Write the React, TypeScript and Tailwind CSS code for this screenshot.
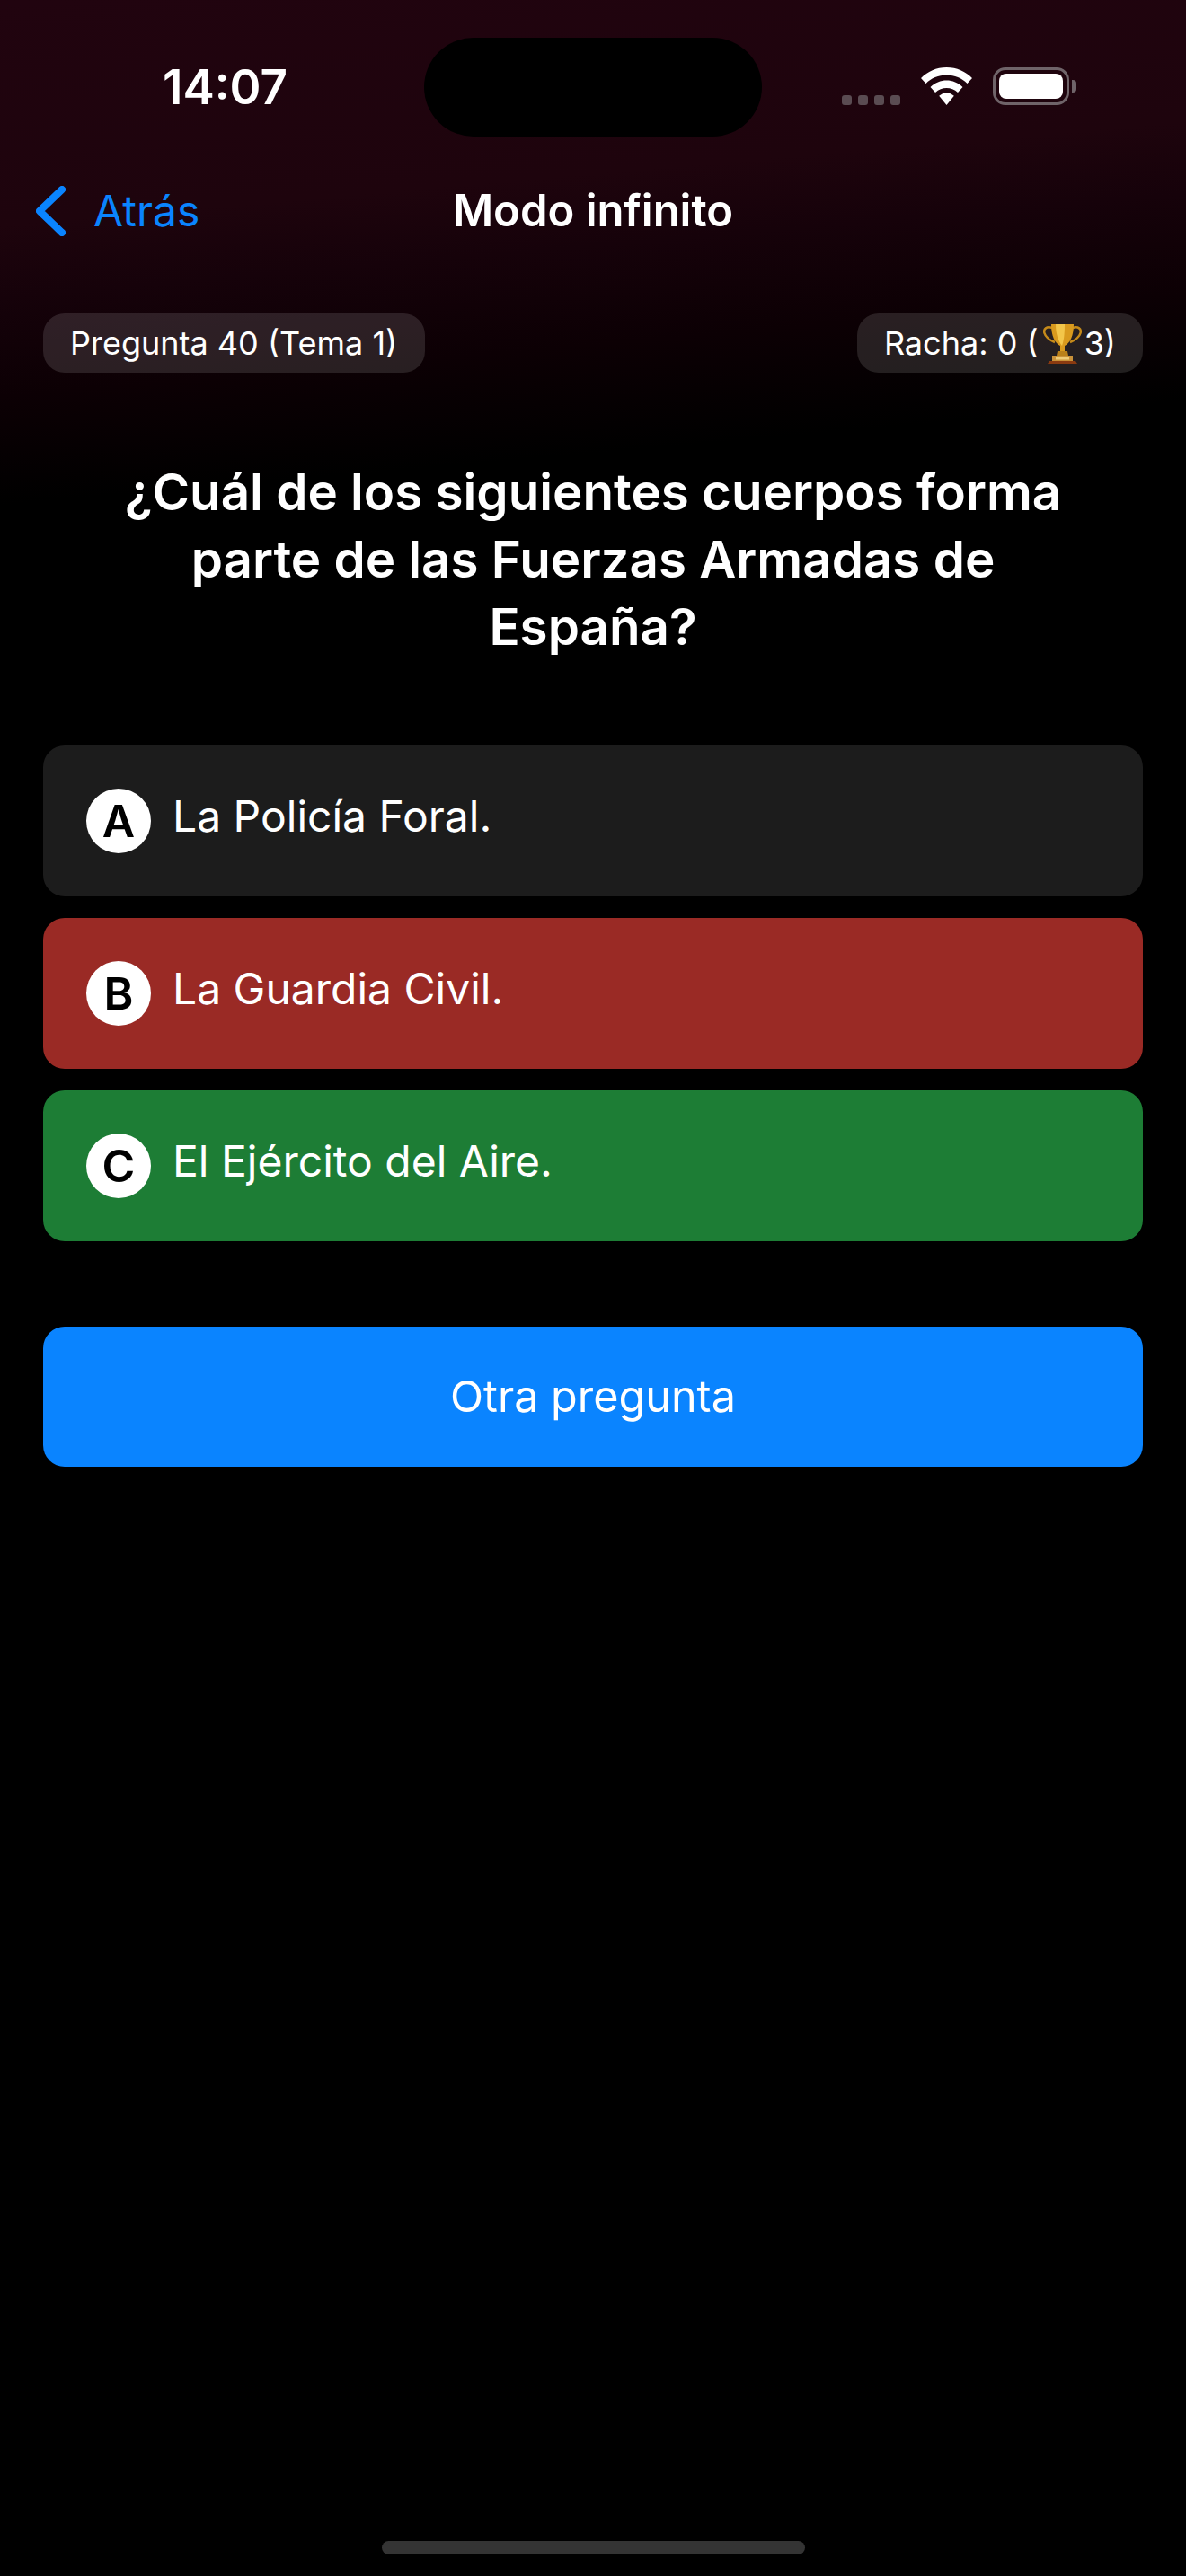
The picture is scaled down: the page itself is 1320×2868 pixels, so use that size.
function Wifi() {
  return (
    <svg width="57" height="42" viewBox="0 0 57 42" fill="#fff">
      <path d="M28.500 0C40 0 49.500 4.500 57 12L51.500 18C45.500 12 37.500 8.500 28.500 8.500S11.500 12 5.500 18L0 12C7.500 4.500 17 0 28.500 0Z" />
      <path d="M28.500 14.500C35 14.500 41.500 17 46.500 22L41 28C37.500 24.700 33 23 28.500 23S19.500 24.700 16 28L10.500 22C15.500 17 22 14.500 28.500 14.500Z" />
      <path d="M28.500 28.500C31.500 28.500 34.500 29.700 36.800 31.800L28.500 42 20.200 31.800C22.500 29.700 25.500 28.500 28.500 28.500Z" />
    </svg>
  );
}

function Battery() {
  return (
    <div className="flex items-center gap-[3px]">
      <div className="w-[85px] h-[42px] rounded-[14px] border-[3px] border-[#6f6469] p-[4px]">
        <div className="w-full h-full rounded-[8px] bg-white" />
      </div>
      <div className="w-[5px] h-[14px] rounded-r-[4px] bg-[#6f6469]" />
    </div>
  );
}

function BackChevron() {
  return (
    <svg width="33" height="56" viewBox="0 0 33 56" fill="none" stroke="#0a84ff" strokeWidth="8" strokeLinecap="round" strokeLinejoin="round">
      <path d="M29 4 4 28 29 52" />
    </svg>
  );
}

function Trophy() {
  return (
    <svg width="43" height="45" viewBox="0 0 43 45" className="shrink-0 ml-[5px] mr-[3px]">
      <path d="M10 5C4 3 0 6 1.500 11 3 16 8 19 13 21M33 5C39 3 43 6 41.500 11 40 16 35 19 30 21" fill="none" stroke="#c58a1a" strokeWidth="2.500" />
      <path d="M9 1H34C34 14 30 22 24 25V31H19V25C13 22 9 14 9 1Z" fill="#d99a1e" />
      <path d="M14 1H24C24 12 23 19 21 25 17 20 14 12 14 1Z" fill="#f3c64a" />
      <path d="M16 31H27L28 36H15Z" fill="#b9801a" />
      <rect x="10" y="36" width="23" height="6" fill="#c9923a" />
      <rect x="14" y="37.500" width="15" height="3" fill="#eecb76" />
      <path d="M7 42H36L38 45H5Z" fill="#8a3a10" />
    </svg>
  );
}

const options = [
  { letter: "A", text: "La Policía Foral.", bg: "bg-[#1c1c1c]" },
  { letter: "B", text: "La Guardia Civil.", bg: "bg-[#9a2a25]" },
  { letter: "C", text: "El Ejército del Aire.", bg: "bg-[#1d7d35]" },
];

export default function App() {
  return (
    <div className="w-[1320px] h-[2868px] flex flex-col bg-[linear-gradient(175deg,#21040f_0,#1e040d_250px,#16020a_330px,#0c0004_440px,#000_560px)] text-white font-['Inter','Liberation_Sans',sans-serif]">
      {/* status bar */}
      <div className="h-[195px] shrink-0 flex items-start pt-[42px]">
        <div className="w-[472px] pl-[181px] pt-[25px] text-[53px] leading-[60px] font-semibold">14:07</div>
        <div className="w-[376px] h-[110px] rounded-[55px] bg-black" />
        <div className="flex items-end pl-[89px] pt-[33px]">
          <div className="flex gap-[7px] mr-[23px]">
            <div className="w-[11px] h-[11px] rounded-[3px] bg-[#5a4c52]" />
            <div className="w-[11px] h-[11px] rounded-[3px] bg-[#5a4c52]" />
            <div className="w-[11px] h-[11px] rounded-[3px] bg-[#5a4c52]" />
            <div className="w-[11px] h-[11px] rounded-[3px] bg-[#5a4c52]" />
          </div>
          <Wifi />
          <div className="ml-[23px]"><Battery /></div>
        </div>
      </div>

      {/* nav */}
      <div className="h-[80px] shrink-0 grid grid-cols-[1fr_auto_1fr] items-center">
        <div className="pl-[40px] flex items-center gap-[31px] text-[#0a84ff] text-[48px]">
          <BackChevron />
          <span>Atrás</span>
        </div>
        <span className="text-[49px] font-semibold">Modo infinito</span>
        <div />
      </div>

      <div className="mt-[74px] mx-[48px] flex justify-between">
        <div className="h-[66px] pl-[30px] pr-[31px] rounded-[24px] bg-white/12 flex items-center text-[36px]">Pregunta 40 (Tema 1)</div>
        <div className="h-[66px] px-[30px] rounded-[24px] bg-white/12 flex items-center text-[36px]">
          Racha: 0 (<Trophy />3)
        </div>
      </div>

      <h1 className="mt-[95px] mx-[120px] text-center text-[56.500px] leading-[75px] font-semibold">
        ¿Cuál de los siguientes cuerpos forma parte de las Fuerzas Armadas de España?
      </h1>

      <div className="mt-[95px] mx-[48px] flex flex-col gap-[24px]">
        {options.map((o) => (
          <div key={o.letter} className={`h-[168px] rounded-[24px] pl-[48px] flex items-center gap-[24px] ${o.bg}`}>
            <div className="w-[72px] h-[72px] rounded-full bg-white text-black flex items-center justify-center text-[50px] font-semibold">{o.letter}</div>
            <span className="text-[48px] mb-[10px]">{o.text}</span>
          </div>
        ))}
      </div>

      <div className="mt-[95px] mx-[48px] h-[156px] rounded-[24px] bg-[#0a84ff] flex items-center justify-center text-[48.500px]">
        Otra pregunta
      </div>

      <div className="mt-auto mb-[24px] mx-auto w-[471px] h-[15px] rounded-full bg-[#343434]" />
    </div>
  );
}
